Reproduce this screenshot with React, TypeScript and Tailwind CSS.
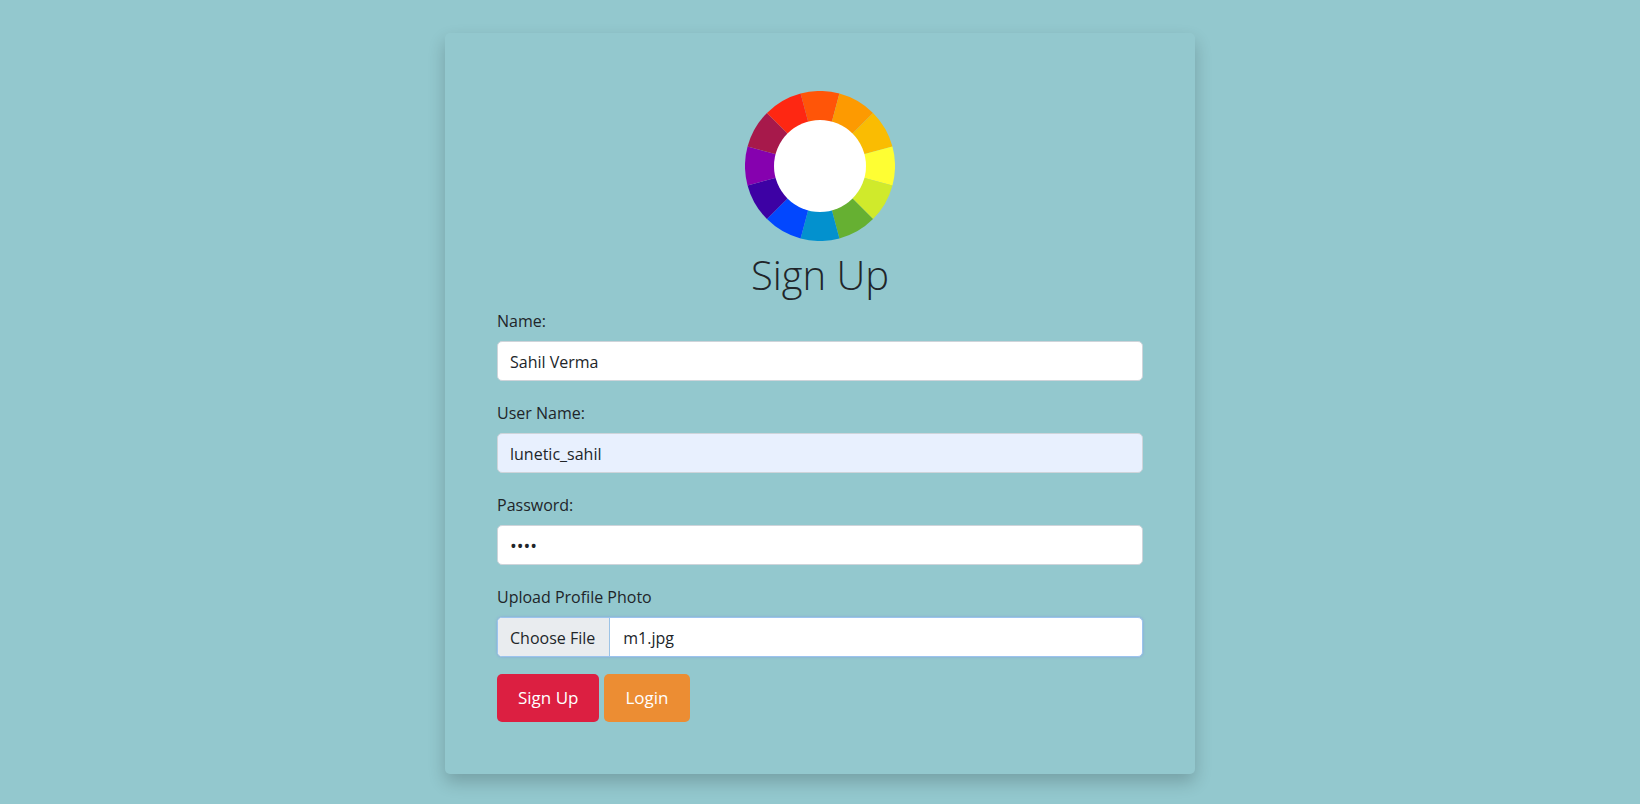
import { useEffect, useRef } from "react";

const WHEEL_COLORS = [
  "#ff5508",
  "#fd9a01",
  "#fabc02",
  "#fefe33",
  "#d0ea2b",
  "#66b032",
  "#0391ce",
  "#0247fe",
  "#3d01a4",
  "#8601af",
  "#a7194b",
  "#fe2712",
];

function sectorPath(index: number): string {
  const start = ((index * 30 - 15 - 90) * Math.PI) / 180;
  const end = ((index * 30 + 15 - 90) * Math.PI) / 180;
  const point = (a: number) => `${75 + 75 * Math.cos(a)} ${75 + 75 * Math.sin(a)}`;
  return `M75 75L${point(start)}A75 75 0 0 1 ${point(end)}Z`;
}

function ColorWheel() {
  return (
    <svg viewBox="0 0 150 150" className="size-[150px]" role="img" aria-label="Color wheel">
      {WHEEL_COLORS.map((color, i) => (
        <path key={color} d={sectorPath(i)} fill={color} />
      ))}
      <circle cx="75" cy="75" r="46" fill="#fff" />
    </svg>
  );
}

const inputClass =
  "h-10 w-full rounded-[5px] border border-[#ced4da] px-3 pt-[2px] text-[#212529] outline-none";

export default function App() {
  const fileRef = useRef<HTMLInputElement>(null);

  useEffect(() => {
    const transfer = new DataTransfer();
    transfer.items.add(new File([""], "m1.jpg", { type: "image/jpeg" }));
    if (fileRef.current) fileRef.current.files = transfer.files;
  }, []);

  return (
    <main className="min-h-screen bg-[#93c8ce] px-4 pt-[33px] pb-[30px] font-['Open_Sans','Noto_Sans',sans-serif] text-[16px] leading-6 text-[#212529]">
      <form
        className="mx-auto max-w-[750px] rounded-[5px] px-[52px] pt-[58px] pb-[52px] shadow-[0_8px_17px_rgba(0,0,0,0.2)]"
        onSubmit={(e) => e.preventDefault()}
      >
        <div className="flex flex-col items-center">
          <ColorWheel />
          <h1 className="pt-[6px] pb-[6px] text-[40px] leading-14 font-light">Sign Up</h1>
        </div>
        <div className="flex flex-col gap-5">
          <div className="flex flex-col gap-2">
            <label htmlFor="name">Name:</label>
            <input id="name" type="text" defaultValue="Sahil Verma" className={`${inputClass} bg-white`} />
          </div>
          <div className="flex flex-col gap-2">
            <label htmlFor="username">User Name:</label>
            <input id="username" type="text" defaultValue="lunetic_sahil" className={`${inputClass} bg-[#e8f0fe]`} />
          </div>
          <div className="flex flex-col gap-2">
            <label htmlFor="password">Password:</label>
            <input id="password" type="password" defaultValue="abcd" className={`${inputClass} bg-white text-[18px]`} />
          </div>
          <div className="flex flex-col gap-2">
            <label htmlFor="photo">Upload Profile Photo</label>
            <input
              ref={fileRef}
              id="photo"
              type="file"
              className="h-10 w-full overflow-hidden rounded-[5px] border border-[#9cc3ee] bg-white shadow-[0_0_2px_1px_rgba(134,160,220,0.4)] outline-none file:mr-[13px] file:h-[38px] file:border-r file:border-[#9cc3e6] file:bg-[#e9ecef] file:pt-[2px] file:pr-[14px] file:pl-3 file:text-[#212529]"
            />
          </div>
        </div>
        <div className="flex gap-[5px] pt-[17px] text-[17px]">
          <button type="submit" className="h-12 rounded-[5px] bg-[#dc1f41] px-[21px] text-white">
            Sign Up
          </button>
          <button type="button" className="h-12 rounded-[5px] bg-[#ec8d33] px-[21px] text-white">
            Login
          </button>
        </div>
      </form>
    </main>
  );
}
